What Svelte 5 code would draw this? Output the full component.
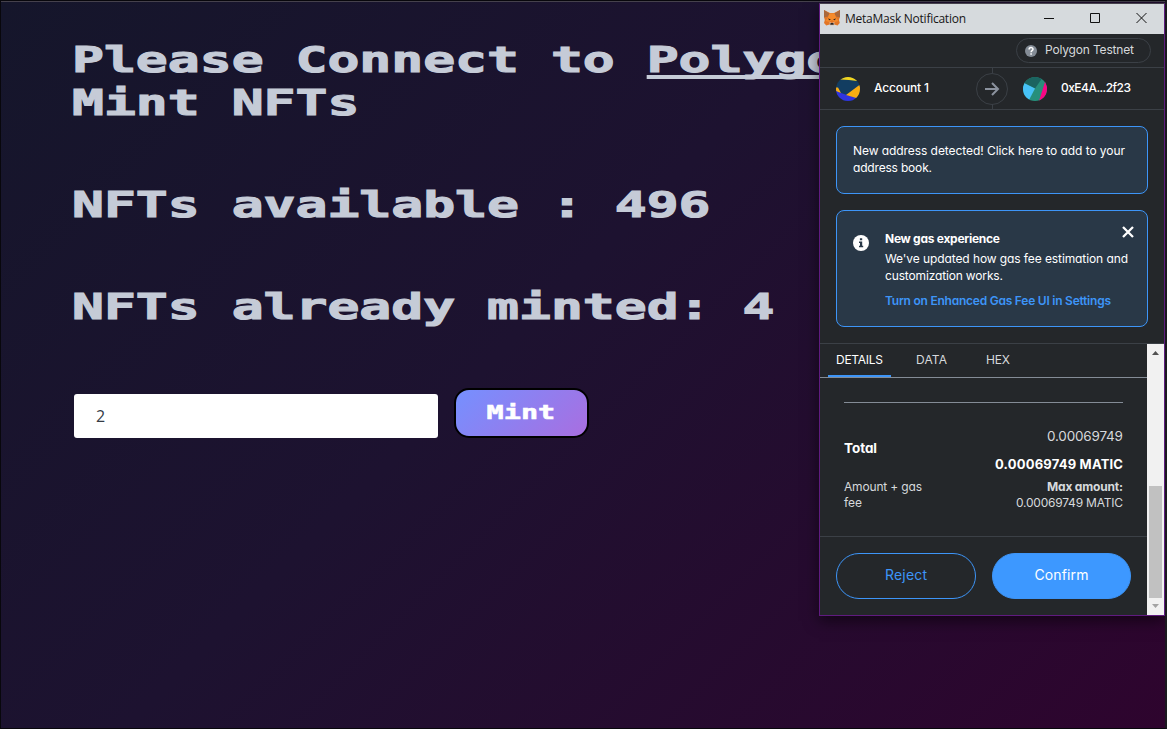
<script>
  // Tracks the text so that a line takes up exactly the given width.
  function fit(node, width) {
    const range = document.createRange();
    range.selectNodeContents(node);
    const natural = range.getBoundingClientRect().width;
    const count = node.textContent.trim().length;
    const space = (width - natural) / Math.max(1, count - 1);
    node.style.letterSpacing = `${space}px`;
    node.style.marginRight = `${-space}px`;
  }
</script>

<div class="page">
  <main>
    <h1><span class="pixel">Please Connect to <u>Polygon</u><br />Mint NFTs</span></h1>
    <h1><span class="pixel">NFTs available : 496</span></h1>
    <h1><span class="pixel">NFTs already minted: 4</span></h1>
    <div class="form">
      <div class="field">2</div>
      <button class="mint"><span>Mint</span></button>
    </div>
  </main>

  <section class="window">
    <header class="titlebar">
      <svg class="fox" width="16" height="16" viewBox="0 0 16 16">
        <path fill="#e27625" d="M0 0 6 3h4l6-3-.2 7-.8 3 .8 3-2.300 2.500-3.200-1H5.500l-3.200 1L0 13l.8-3L0 7z" />
        <path fill="#a9683c" d="M0 0 5.500 3.500 4 6.500 0 7.500zM16 0 10.500 3.500 12 6.500l4 1z" />
        <path fill="#f58b2c" d="M5.500 3.500h5l1.500 4 2.500 3.500-4 1-2.500-2-2.500 2-4-1L4 7.500z" />
        <path fill="#d6c4b5" d="M5.500 12 8 13l2.500-1-.5 3.500H6z" />
        <path fill="#302622" d="M4.200 8.200 7 9.700l-2 .6zM11.800 8.200 9 9.700l2 .6zM6.600 13h2.800l.4 1.700H6.200z" />
      </svg>
      <span class="title" use:fit={121}>MetaMask Notification</span>
      <svg class="controls" width="104" height="12" viewBox="0 0 104 12" fill="none" stroke="#111">
        <path d="M0 6.500h10M46.500 1.500h9v9h-9zM92.500 1l10 10M102.500 1l-10 10" />
      </svg>
    </header>

    <div class="network">
      <div class="chip">
        <svg width="12" height="12" viewBox="0 0 12 12"><circle cx="6" cy="6" r="6" fill="#848c96" /><path d="M4.100 4.500c0-2.500 3.900-2.500 3.900-.2C8 5.800 6.100 5.600 6.100 7.200M6.100 8.300v1.500" fill="none" stroke="#fff" stroke-width="1.500" /></svg>
        <span use:fit={89}>Polygon Testnet</span>
      </div>
    </div>

    <div class="accounts">
      <div class="account">
        <svg width="24" height="24" viewBox="0 0 24 24">
          <defs><clipPath id="round"><circle cx="12" cy="12" r="12" /></clipPath></defs>
          <g clip-path="url(#round)"><path fill="#123d61" d="M0 0h24v24H0z" /><path fill="#f3d51e" d="M3 0h18v4L13 3 4 2.500z" /><path fill="#3134dd" d="M0 13l5 3 6 2 12 3v3H0z" /><path fill="#f7ac13" d="M0 10.500l2 0 3 5.500-5-2zM24 7.500v13.500l-2 0.500-12-3.500z" /></g>
        </svg>
        <span use:fit={55}>Account 1</span>
      </div>
      <div class="arrow"><svg width="16" height="16" viewBox="0 0 16 16" fill="none" stroke="#8b929e" stroke-width="2"><path d="M1 8h13M8 2l6 6-6 6" /></svg></div>
      <div class="account to">
        <svg width="24" height="24" viewBox="0 0 24 24">
          <g clip-path="url(#round)"><path fill="#278f7b" d="M0 0h24v24H0z" /><path fill="#1b6460" d="M0 0h20l-8 11.500L1 6z" /><path fill="#47c2f6" d="M0 5.500l12 6L5.500 24H0z" /><path fill="#f90684" d="M22 5l2 1v18h-8z" /></g>
        </svg>
        <span use:fit={70}>0xE4A...2f23</span>
      </div>
    </div>

    <div class="alerts">
      <div class="alert first">
        <p><span use:fit={272}>New address detected! Click here to add to your</span></p>
        <p><span use:fit={79}>address book.</span></p>
      </div>
      <div class="alert gas">
        <svg class="info" width="16" height="16" viewBox="0 0 16 16"><circle cx="8" cy="8" r="8" fill="#fff" /><path fill="#293847" d="M6.900 3.300h2.300v2H6.900zM6 6.500h3.200v4.200h1v1.500H6v-1.500h1V8H6z" /></svg>
        <div class="copy">
          <p class="strong"><span use:fit={115}>New gas experience</span></p>
          <p><span use:fit={243}>We've updated how gas fee estimation and</span></p>
          <p><span use:fit={118}>customization works.</span></p>
          <p class="link"><span use:fit={226}>Turn on Enhanced Gas Fee UI in Settings</span></p>
        </div>
        <svg class="close" width="12" height="12" viewBox="0 0 12 12" stroke="#fff" stroke-width="2.300"><path d="M1 1l10 10M11 1 1 11" /></svg>
      </div>
    </div>

    <div class="scroller">
      <div class="content">
        <nav>
          <div class="tab active"><span use:fit={47}>DETAILS</span></div>
          <div class="tab"><span use:fit={31}>DATA</span></div>
          <div class="tab"><span use:fit={24}>HEX</span></div>
        </nav>
        <div class="totals">
          <div class="left">
            <div class="total"><span use:fit={33}>Total</span></div>
            <div class="note"><span use:fit={78}>Amount + gas</span><br /><span use:fit={18}>fee</span></div>
          </div>
          <div class="right">
            <div class="fiat"><span use:fit={76}>0.00069749</span></div>
            <div class="sum"><span use:fit={128}>0.00069749 MATIC</span></div>
            <div class="max"><b use:fit={76}>Max amount:</b></div>
            <div class="max"><span use:fit={107}>0.00069749 MATIC</span></div>
          </div>
        </div>
        <footer>
          <button class="reject"><span use:fit={42}>Reject</span></button>
          <button class="confirm"><span use:fit={54}>Confirm</span></button>
        </footer>
      </div>
      <div class="bar">
        <svg width="17" height="17" viewBox="0 0 17 17"><path fill="#505050" d="M5 11l3.500-4 3.500 4z" /></svg>
        <div class="thumb"></div>
        <svg width="17" height="17" viewBox="0 0 17 17"><path fill="#a3a3a3" d="M5 6l3.500 4L12 6z" /></svg>
      </div>
    </div>
  </section>
</div>

<style>
  :global(body) { margin: 0; }
  .page {
    position: relative; box-sizing: border-box; width: 1167px; height: 729px; overflow: hidden;
    border: 1px solid #08070c; border-right: 2px solid #1b1920;
    background: linear-gradient(135deg, #15162b 0%, #1d1230 45%, #2e042e 100%);
    box-shadow: inset 0 1px #45414c;
  }
  main { padding: 37px 0 0 71px; width: 1000px; box-sizing: border-box; }
  h1 { margin: 0 0 59px; font: bold 36px/43px "DejaVu Sans Mono", monospace; color: #c5cbd7; }
  .pixel { display: block; width: 660px; white-space: nowrap; transform: scaleX(1.473); transform-origin: 0 0; -webkit-text-stroke: 1.1px #c5cbd7; }
  u { text-decoration-thickness: 4px; text-underline-offset: 3px; text-decoration-skip-ink: none; }
  .form { display: flex; align-items: flex-end; gap: 16px; margin-top: 60px; }
  .field {
    box-sizing: border-box; width: 364px; height: 44px; padding-left: 22px; margin-left: 2px; border-radius: 3px;
    background: #fff; color: #353b45; font: 16px/44px "Open Sans", sans-serif;
  }
  .mint {
    width: 135px; height: 50px; padding: 0 0 3px; border: 2px solid #000; border-radius: 15px; color: #fff;
    background: linear-gradient(135deg, #7590ff, #a96ee0); font: bold 19px/40px "DejaVu Sans Mono", monospace;
  }
  .mint span { display: inline-block; transform: translateX(-1px) scaleX(1.5); -webkit-text-stroke: 0.5px #fff; }

  .window {
    position: absolute; left: 818px; top: 2px; width: 344px; height: 611px; border: 1px solid #601b80;
    border-top-color: #45414c; background: #24272a; box-shadow: 0 5px 14px #0008;
    font: 12px/17px Inter, sans-serif; font-feature-settings: "cv11", "calt" 0; color: #fff;
  }
  .window span, .window b { white-space: nowrap; }
  .window svg { flex-shrink: 0; }
  .titlebar { display: flex; align-items: center; height: 30px; padding: 0 16px 0 4px; background: #d6dadd; color: #161616; }
  .fox { margin-top: -2px; }
  .title { margin-left: 5px; font: 12px/18px "Open Sans", sans-serif; }
  .controls { margin: -2px 0 0 auto; }
  .network { display: flex; justify-content: flex-end; height: 34px; padding: 4px 13px 0 0; box-sizing: border-box; border-bottom: 1px solid #3b4046; }
  .chip { box-sizing: border-box; display: flex; align-items: center; gap: 8px; width: 135px; height: 25px; padding-left: 8px; border: 1px solid #3b4046; border-radius: 13px; color: #d6d9dc; }
  .chip span { margin-top: -2px; }
  .accounts {
    display: grid; grid-template-columns: 156px 32px 1fr; box-sizing: border-box; height: 42px; border-bottom: 1px solid #3b4046;
    background: linear-gradient(#3b4046, #3b4046) 172px 0 / 1px 5px no-repeat, linear-gradient(#3b4046, #3b4046) 172px 100% / 1px 5px no-repeat;
  }
  .account { display: flex; align-items: center; gap: 14px; padding-left: 16px; }
  .account.to { padding-left: 15px; }
  .account span { margin-top: -2px; font-weight: 500; }
  .arrow { display: grid; place-items: center; align-self: center; box-sizing: border-box; width: 32px; height: 32px; border: 1px solid #3b4046; border-radius: 50%; }
  .alerts { display: flex; flex-direction: column; gap: 16px; padding: 16px 16px 0; height: 217px; }
  .alert { box-sizing: border-box; width: 312px; border: 1px solid #3d95f8; border-radius: 8px; background: #293847; }
  .alert p { margin: 0; }
  .first { height: 68px; padding: 15px 16px; }
  .gas { display: flex; height: 117px; padding: 19px 13px 0 16px; }
  .info { margin-top: 5px; }
  .copy { flex: none; width: 244px; margin-left: 16px; }
  .strong { font-weight: 700; padding-bottom: 3px; }
  .alert .link { margin-top: 8px; font-weight: 600; color: #3d95f8; }
  .close { margin: -4px 0 0 -7px; }
  .scroller { display: flex; box-sizing: border-box; height: 272px; border-top: 1px solid #3b4046; }
  .content { width: 327px; }
  nav { display: flex; box-sizing: border-box; height: 34px; padding-left: 8px; border-bottom: 1px solid #848c96; }
  .tab { box-sizing: border-box; height: 33px; padding: 7px 8px 0; margin-right: 17px; color: #d6d9dc; }
  .tab + .tab { margin-right: 23px; }
  .active { width: 63px; color: #fff; border-bottom: 2px solid #3d95f8; }
  .totals { display: flex; justify-content: space-between; height: 133px; margin: 24px 24px 0; border-top: 1px solid #848c96; }
  .left { padding-top: 35px; }
  .total { font-size: 13.500px; font-weight: 700; line-height: 20px; }
  .note { margin-top: 21px; line-height: 16px; color: #d6d9dc; }
  .right { padding-top: 22px; text-align: right; color: #d6d9dc; }
  .fiat { font-size: 13.500px; line-height: 22px; }
  .sum { margin: 6px 0 4px; font-size: 13px; font-weight: 700; line-height: 22px; color: #fff; }
  .max { line-height: 16px; }
  footer { display: flex; gap: 16px; padding: 16px; border-top: 1px solid #3b4046; }
  footer button { box-sizing: border-box; width: 140px; height: 46px; padding: 0 0 4px; border: 1px solid #3d95f8; border-radius: 23px; background: none; color: #3d95f8; font: 14px Inter, sans-serif; font-feature-settings: "cv11"; }
  footer .confirm { width: 139px; background: #3d98ff; color: #fff; }
  .bar { display: flex; flex-direction: column; width: 17px; background: #f1f1f1; }
  .thumb { width: 13px; height: 112px; margin: auto 2px 0; background: #c1c1c1; }
</style>
